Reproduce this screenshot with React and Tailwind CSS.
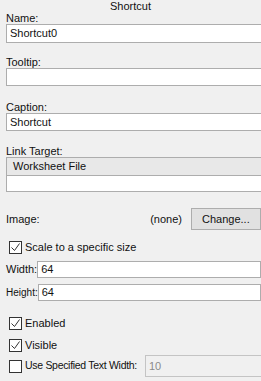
const Check = ({ checked }) => (
  <span className="w-[13px] h-[13px] border border-[#333333] bg-white flex items-center justify-center shrink-0">
    {checked && (
      <svg width="11" height="11" viewBox="0 0 11 11">
        <path d="M1.5 5.5 L4.5 8.5 L9.5 1.5" fill="none" stroke="#333333" strokeWidth="1" />
      </svg>
    )}
  </span>
)

const Field = ({ value, h = 'h-[18px]' }) => (
  <div className={`${h} w-[270px] border border-[#adadad] bg-white pl-[3px] flex items-center text-[#111]`}>
    {value}
  </div>
)

const Label = ({ children, className = '' }) => (
  <div className={`h-[12px] leading-[12px] text-[#111] ${className}`}>{children}</div>
)

export default function App() {
  return (
    <div className="w-[261px] h-[381px] overflow-hidden bg-[#f0f0f0] text-[11px] font-['Liberation_Sans',Arial,sans-serif]">
      <div className="h-[12px] leading-[13px] text-center text-[#111]">Shortcut</div>
      <div className="pl-[6px]">
        <Label>Name:</Label>
        <Field value="Shortcut0" h="h-[19px]" />
        <Label className="mt-[13px]">Tooltip:</Label>
        <Field />
        <Label className="mt-[15px]">Caption:</Label>
        <Field value="Shortcut" />
        <Label className="mt-[14px]">Link Target:</Label>
        <div className="w-[270px] border border-[#adadad]">
          <div className="h-[17px] bg-[#e8e8e8] pl-[6px] flex items-center text-[#111]">Worksheet File</div>
          <div className="h-[16px] bg-white border-t border-[#adadad]"></div>
        </div>
        <div className="mt-[16px] h-[22px] flex items-center">
          <span className="text-[#111]">Image:</span>
          <span className="ml-auto text-[#111]">(none)</span>
          <div className="ml-[9px] h-[22px] w-[70px] border border-[#adadad] bg-[#e1e1e1] pl-[10px] flex items-center text-[#111]">
            Change...
          </div>
        </div>
        <div className="mt-[11px] ml-[3px] flex items-center gap-[3px] h-[13px]">
          <Check checked />
          <span className="text-[#111]">Scale to a specific size</span>
        </div>
        <div className="mt-[7px] flex items-center h-[17px]">
          <span className="w-[32px] text-[#111]">Width:</span>
          <div className="h-[17px] w-[240px] border border-[#adadad] bg-white pl-[3px] flex items-center text-[#111]">64</div>
        </div>
        <div className="mt-[6px] flex items-center h-[17px]">
          <span className="w-[32px] text-[10px] text-[#111]">Height:</span>
          <div className="h-[17px] w-[240px] border border-[#adadad] bg-white pl-[3px] flex items-center text-[#111]">64</div>
        </div>
        <div className="mt-[16px] ml-[3px] flex items-center gap-[3px] h-[13px]">
          <Check checked />
          <span className="text-[#111]">Enabled</span>
        </div>
        <div className="mt-[9px] ml-[3px] flex items-center gap-[3px] h-[13px]">
          <Check checked />
          <span className="text-[#111]">Visible</span>
        </div>
        <div className="mt-[3px] ml-[3px] flex items-center gap-[3px] h-[22px]">
          <Check />
          <span className="w-[116px] shrink-0 whitespace-nowrap text-[10.5px] tracking-[-0.3px] text-[#111]">Use Specified Text Width:</span>
          <div className="ml-[1px] shrink-0 h-[22px] w-[130px] border border-[#c4c4c4] bg-[#f0f0f0] pl-[3px] flex items-center text-[#8a8a8a]">10</div>
        </div>
      </div>
    </div>
  )
}
